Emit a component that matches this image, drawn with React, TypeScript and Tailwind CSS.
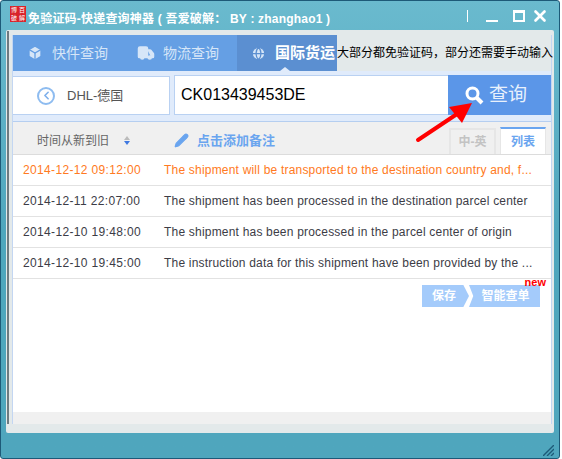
import { Box, ChevronLeft, Globe, Pencil, Truck, X } from "lucide-react";

const cjk = "font-['Liberation_Sans','Noto_Sans_CJK_SC',sans-serif]";

const rows = [
  { time: "2014-12-12 09:12:00", text: "The shipment will be transported to the destination country and, f...", hot: true },
  { time: "2014-12-11 22:07:00", text: "The shipment has been processed in the destination parcel center", hot: false },
  { time: "2014-12-10 19:48:00", text: "The shipment has been processed in the parcel center of origin", hot: false },
  { time: "2014-12-10 19:45:00", text: "The instruction data for this shipment have been provided by the ...", hot: false },
];

const App = () => {
  return (
    <div className={`relative h-[459px] w-[562px] overflow-hidden bg-white ${cjk}`}>
      <div className="flex h-[459px] w-[560px] flex-col rounded-[3px] border border-[#1d5a78] bg-gradient-to-b from-[#6abace] via-[#4fa6bd] to-[#4fa6bd] to-[12%] px-[5px]">
        {/* title bar */}
        <div className="flex h-[29px] shrink-0 items-center">
          <div className="ml-[4px] grid h-[16px] w-[16px] -translate-y-[2px] grid-cols-2 bg-[#d8232a] text-center text-[6px] leading-[8px] text-white">
            <span>博</span><span>百</span><span>破</span><span>解</span>
          </div>
          <span className="ml-[2px] mt-[7px] whitespace-nowrap text-[12px] font-semibold tracking-[0.2px] text-white">免验证码-快递查询神器 ( 吾爱破解： BY : zhanghao1 )</span>
          <div className="ml-auto flex items-center pr-[5px] text-white">
            <span className="h-[12px] w-px bg-white" />
            <span className="ml-[18px] mt-[11px] h-[2px] w-[12px] bg-white" />
            <span className="ml-[15px] h-[12px] w-[12px] border-2 border-t-[3px] border-white" />
            <X size={18} strokeWidth={3.5} className="ml-[6px]" />
          </div>
        </div>

        {/* client area */}
        <div className="flex h-[403px] w-[548px] shrink-0 flex-col rounded-[2px] bg-[#e3e9ea] pb-[9px] pl-[1px] pr-[2px] pt-[1px]">
          <div className="flex min-h-0 flex-1 border-l-2 border-[#6f7a80] pl-[3px] pt-[4px]">
            <div className="flex min-w-0 flex-1 flex-col border-x border-[#c3d6f2]">
              {/* tabs */}
              <div className="flex h-[36px] shrink-0 items-center">
                <div className="flex h-full w-[224px] shrink-0 items-center bg-[#659fe4] text-[14px] text-[#d6e6f8]">
                  <Box size={16} className="ml-[14px] fill-[#d6e6f8] text-[#659fe4]" />
                  <span className="ml-[9px]">快件查询</span>
                  <Truck size={18} className="ml-[29px] fill-[#d6e6f8] text-[#d6e6f8]" />
                  <span className="ml-[8px]">物流查询</span>
                </div>
                <div className="relative flex h-full w-[100px] shrink-0 items-center bg-[#5b8fd1] text-[15px] font-bold text-white">
                  <Globe size={15} className="ml-[14px] fill-[#d6e6f8] text-[#5b8fd1]" />
                  <span className="ml-[9px] whitespace-nowrap">国际货运</span>
                  <span className="absolute bottom-0 left-[43px] h-0 w-0 border-x-[5px] border-b-[4px] border-x-transparent border-b-[#e0ebfb]" />
                </div>
                <span className="whitespace-nowrap text-[12px] text-black">大部分都免验证码，部分还需要手动输入</span>
              </div>

              {/* search row */}
              <div className="flex h-[51px] shrink-0 items-start border-b border-[#b5cef0] bg-[#e0ebfb] pt-[4px]">
                <div className="mt-[1px] flex h-[39px] w-[157px] items-center border border-l-0 border-[#b9d1f2] bg-white">
                  <span className="ml-[24px] flex h-[18px] w-[18px] items-center justify-center rounded-full border-2 border-[#8ebcf0]">
                    <ChevronLeft size={13} strokeWidth={3} className="text-[#7eb0ec]" />
                  </span>
                  <span className="ml-[12px] text-[13px] text-[#555]">DHL-德国</span>
                </div>
                <div className="ml-[4px] flex h-[40px] w-[274px] items-center border border-r-0 border-[#b9d1f2] bg-white pl-[6px] text-[16px] text-black">
                  CK013439453DE
                </div>
                <div className="flex h-[40px] flex-1 items-center justify-center gap-[5px] bg-[#5b96e8] pr-[7px] text-[19px] text-[#e8f1fc]">
                  <svg width="19" height="19" viewBox="0 0 19 19" fill="none" stroke="#fff" className="mt-[1px]">
                    <circle cx="7.5" cy="7.5" r="5.5" strokeWidth="3" />
                    <path d="M12 12 17 17" strokeWidth="4" />
                  </svg>
                  <span>查询</span>
                </div>
              </div>

              {/* toolbar */}
              <div className="flex h-[33px] shrink-0 items-end border-b border-[#dcdcdc] bg-[#f0f0f0]">
                <div className="flex h-full items-center pt-[5px]">
                  <span className="ml-[24px] text-[12px] text-[#666]">时间从新到旧</span>
                  <span className="ml-[15px] flex flex-col gap-[1px]">
                    <span className="h-0 w-0 border-x-[3px] border-b-[4px] border-x-transparent border-b-[#bbb]" />
                    <span className="h-0 w-0 border-x-[3px] border-t-[4px] border-x-transparent border-t-[#3f78e0]" />
                  </span>
                  <Pencil size={15} className="ml-[44px] fill-[#6aa5ef] text-[#6aa5ef]" />
                  <span className="ml-[8px] text-[13px] font-bold text-[#6aa5ef]">点击添加备注</span>
                </div>
                <div className="ml-auto flex items-end pr-[5px]">
                  <span className="flex h-[26px] w-[47px] items-center justify-center border-2 border-b-0 border-[#e6e6e6] text-[12px] font-bold text-[#c3c3c3]">中-英</span>
                  <span className="ml-[4px] flex h-[27px] w-[46px] items-center justify-center border-t-2 border-x border-x-[#e6e6e6] border-t-[#6aa5ef] bg-white text-[12px] font-bold text-[#6aa5ef]">列表</span>
                </div>
              </div>

              {/* list */}
              <div className="flex min-h-0 flex-1 flex-col bg-white">
                {rows.map((row) => (
                  <div
                    key={row.time}
                    className={`flex h-[31px] shrink-0 items-center border-b border-[#e2e2e2] text-[12px] ${row.hot ? "text-[#ff7a22]" : "text-[#3c3c46]"}`}
                  >
                    <span className="ml-[10px] w-[141px] shrink-0 tracking-[0.35px]">{row.time}</span>
                    <span className="whitespace-nowrap tracking-[0.2px]">{row.text}</span>
                  </div>
                ))}
                <div className="mr-[11px] mt-[6px] flex justify-end">
                  <span className="flex h-[22px] w-[47px] items-center justify-center bg-[#a4cbfb] pr-[3px] text-[12px] font-bold text-white [clip-path:polygon(0_0,88%_0,100%_50%,88%_100%,0_100%)]">保存</span>
                  <span className="relative flex h-[22px] w-[71px] items-center justify-center pl-[2px] text-[12px] font-bold text-white">
                    <span className="absolute inset-0 bg-[#a4cbfb] [clip-path:polygon(0_0,100%_0,100%_100%,0_100%,6%_50%)]" />
                    <span className="relative">智能查单</span>
                    <span className="absolute -top-[9px] right-[-6px] font-['Liberation_Sans',sans-serif] text-[11px] font-bold leading-[12px] text-[#f00]">new</span>
                  </span>
                </div>
              </div>
              <div className="h-[12px] shrink-0 bg-[#f0f0f0]" />
            </div>
          </div>
        </div>

        {/* resize grip */}
        <div className="flex flex-1 items-end justify-end">
          <svg width="11" height="11" viewBox="0 0 11 11" className="mb-[2px]" fill="none" stroke="#1d5a78" strokeWidth="1.4">
            <path d="M0 11 11 0M4 11 11 4M8 11 11 8" />
          </svg>
        </div>
      </div>

      {/* red annotation arrow */}
      <svg width="70" height="50" viewBox="0 0 70 50" className="absolute left-[410px] top-[98px]">
        <path d="M8 42 47 16" stroke="#f00" strokeWidth="4" strokeLinecap="round" />
        <path d="M39 9 62 5 52 25Z" fill="#f00" />
      </svg>
    </div>
  );
};

export default App;
